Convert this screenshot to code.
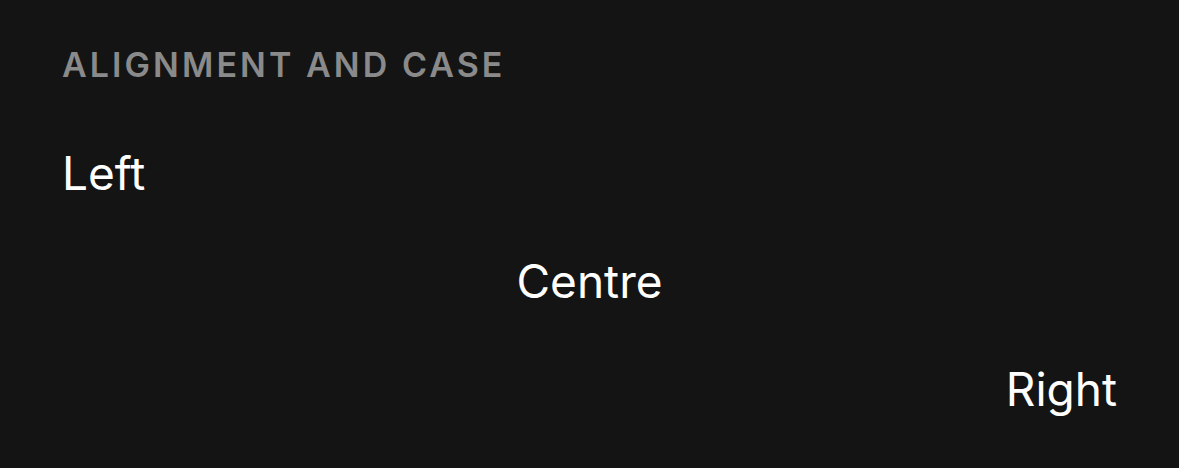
export default function App() {
  return (
    <div
      className="w-[1179px] h-[468px] bg-[#141414] px-[62px] pt-[45px] overflow-hidden"
      style={{ fontFamily: "Inter, 'Noto Sans', sans-serif" }}
    >
      <h2 className="text-[34px] leading-[40px] font-semibold tracking-[0.09em] text-[#8a8a8a] mb-[34px]">
        ALIGNMENT AND CASE
      </h2>
      <div className="text-[46px] leading-[108px] text-white">
        <p className="text-left">Left</p>
        <p className="text-center">Centre</p>
        <p className="text-right">Right</p>
      </div>
    </div>
  );
}
